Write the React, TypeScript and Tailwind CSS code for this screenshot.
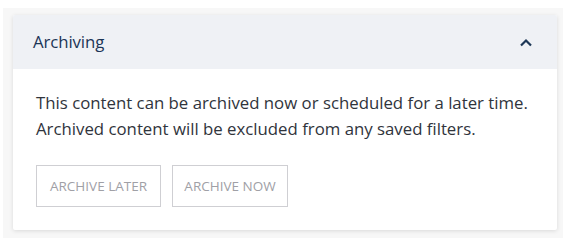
import React from "react";

export default function App() {
  return (
    <div className="w-[567px] h-[240px] bg-white pt-[8px] pl-[3px] pr-[4px] pb-[2px]" style={{ fontFamily: "'Open Sans', sans-serif" }}>
      <div className="h-[230px] bg-[#f7f7f7] pl-[10px] pr-[6px] pt-[7px]">
        <div className="bg-white shadow-[0_1px_4px_rgba(0,0,0,0.12)] rounded-[2px] overflow-hidden">
          <div className="h-[54px] bg-[#eff1f5] flex items-center justify-between pl-[20px] pr-[24px]">
            <span className="text-[16.8px] text-[#1b3556] tracking-[-0.1px]">Archiving</span>
            <svg width="14" height="9" viewBox="0 0 14 9" fill="none">
              <path d="M2 7.5 L7 2.5 L12 7.5" stroke="#1e3857" strokeWidth="2.2" />
            </svg>
          </div>
          <div className="pl-[23px] pt-[21px] pb-[23px]">
            <p className="text-[16.8px] leading-[26px] text-[#30343c]">
              This content can be archived now or scheduled for a later time.
              <br />
              Archived content will be excluded from any saved filters.
            </p>
            <div className="flex gap-[11px] mt-[23px]">
              <button className="h-[42px] w-[125px] border border-[#cfcfd3] text-[13.5px] text-[#a0a0a6] uppercase">Archive later</button>
              <button className="h-[42px] w-[116px] border border-[#cfcfd3] text-[13.5px] text-[#a0a0a6] uppercase">Archive now</button>
            </div>
          </div>
        </div>
      </div>
    </div>
  );
}
